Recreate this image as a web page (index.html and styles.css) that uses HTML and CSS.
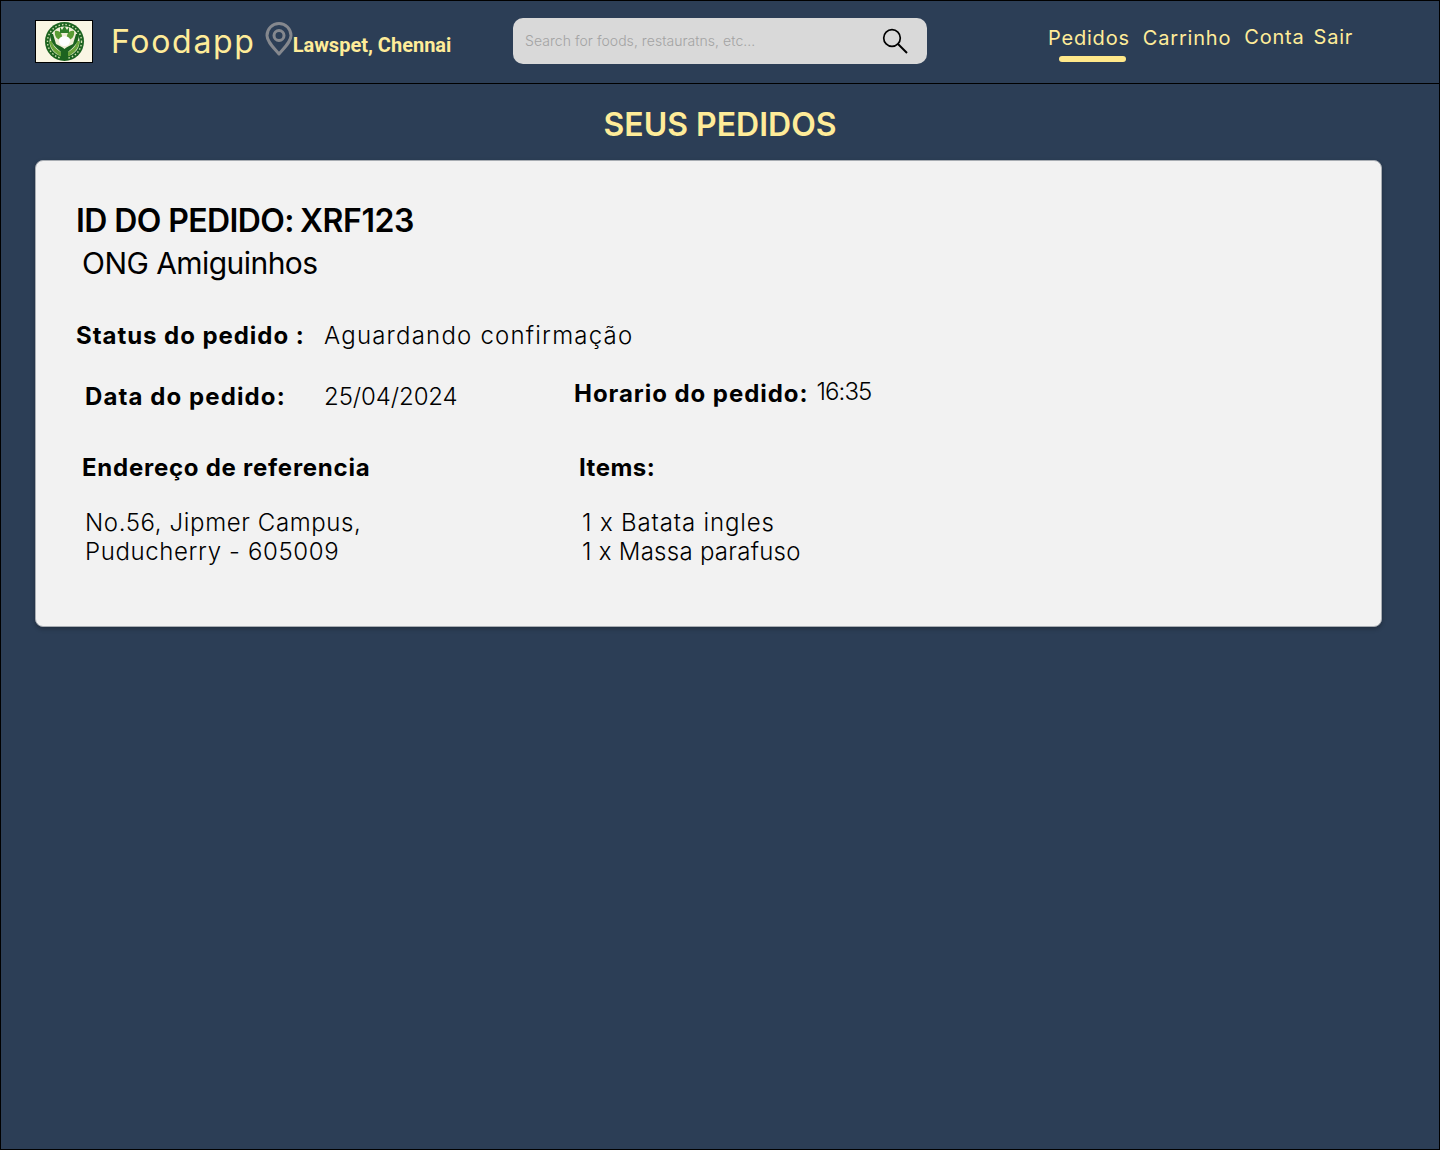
FILE: index.html
```html
<!DOCTYPE html>
<html lang="pt-BR">
<head>
    <meta charset="UTF-8">
    <meta name="viewport" content="width=device-width, initial-scale=1.0">
    <title>Foodapp - Seus pedidos</title>
    <link rel="stylesheet" href="styles.css">
</head>
<body>
    <header class="topbar">
        <div class="brand">
            <svg class="logo" viewBox="0 0 56 41" aria-hidden="true">
                <rect width="56" height="41" fill="#faf6e4"/>
                <circle cx="28.5" cy="20.5" r="19.5" fill="#1c6320"/>
                <circle cx="28.5" cy="20.5" r="17" fill="none" stroke="#cfe0b0" stroke-width="1.4" stroke-dasharray="1.5 2"/>
                <circle cx="28.5" cy="20.5" r="15" fill="#f1efd8"/>
                <path d="M13.5 20 C14 28 20 33 26 36 L31 36 C37 33 43 28 43.5 20 L41 20 C40 26 36 29 28.5 33 C21 29 17 26 16 20 Z" fill="#6aa53a"/>
                <path d="M14 13 L17 13 L20 23 C23 25 27 26 28.5 28 C30 26 34 25 37 23 L40 13 L43 13 C43 23 36 27 32 31 L32 39 L25 39 L25 31 C21 27 14 23 14 13 Z" fill="#1c6320"/>
                <path d="M19 10 C24 9 27 13 26 19 C21 19 18 15 19 10 Z M38 10 C33 9 30 13 31 19 C36 19 39 15 38 10 Z" fill="#5a9c34"/>
                <path d="M24 6 L26 9 L28.5 5 L31 9 L33 6 L33 12 L24 12 Z" fill="#2f7d2a"/>
                <path d="M23 19 C23 14 34 14 34 19 C34 24 31 25 28.5 25 C26 25 23 24 23 19 Z" fill="#ffffff"/>
            </svg>
            <span class="brand-name">Foodapp</span>
            <svg class="pin" viewBox="0 0 28 34" aria-hidden="true">
                <path d="M14 32 C8 25 2 19.5 2 13.5 A12 12 0 0 1 26 13.5 C26 19.5 20 25 14 32 Z" fill="none" stroke="#85888e" stroke-width="3" stroke-linejoin="round"/>
                <circle cx="14" cy="13.5" r="5" fill="none" stroke="#85888e" stroke-width="3"/>
            </svg>
            <span class="location">Lawspet, Chennai</span>
        </div>
        <div class="search">
            <span class="search-text">Search for foods, restauratns, etc...</span>
            <svg class="search-icon" viewBox="0 0 26 26" aria-hidden="true">
                <circle cx="10" cy="10" r="8.3" fill="none" stroke="#000" stroke-width="1.7"/>
                <path d="M16 16 L25 25" stroke="#000" stroke-width="1.9" fill="none"/>
            </svg>
        </div>
        <nav class="nav">
            <a class="nav-link active">Pedidos</a>
            <a class="nav-link">Carrinho</a>
            <a class="nav-link nav-link-up">Conta</a>
            <a class="nav-link nav-link-up nav-link-last">Sair</a>
        </nav>
    </header>

    <main class="content">
        <h1 class="page-title">SEUS PEDIDOS</h1>
        <section class="order-card">
            <h2 class="order-id"><span class="order-id-label">ID DO PEDIDO:</span><span>XRF123</span></h2>
            <p class="order-ong">ONG Amiguinhos</p>

            <div class="status-row">
                <strong class="status-label">Status do pedido :</strong>
                <span class="status-value">Aguardando confirmação</span>
            </div>

            <div class="date-row">
                <strong class="date-label">Data do pedido:</strong>
                <span class="date-value">25/04/2024</span>
                <strong class="time-label">Horario do pedido:</strong>
                <span class="time-value">16:35</span>
            </div>

            <div class="details">
                <div class="address">
                    <strong class="detail-title">Endereço de referencia</strong>
                    <p class="detail-text">No.56, Jipmer Campus,<br>Puducherry - 605009</p>
                </div>
                <div class="items">
                    <strong class="detail-title items-title">Items:</strong>
                    <p class="detail-text items-text"><span class="item-wide">1 x Batata ingles</span><br><span>1 x Massa parafuso</span></p>
                </div>
            </div>
        </section>
    </main>
</body>
</html>
```

FILE: styles.css
```css
* {
    box-sizing: border-box;
}
html, body {
    height: 100%;
}
body {
    margin: 0;
    height: 1150px;
    background-color: #2c3e56;
    border: 1px solid #000;
    font-family: Inter, Arial, sans-serif;
    color: #000;
    overflow: hidden;
}
.topbar {
    display: flex;
    align-items: center;
    height: 83px;
    padding-left: 34px;
    border-bottom: 1px solid #000;
}
.brand {
    display: flex;
    align-items: center;
    width: 478px;
}
.logo {
    width: 58px;
    height: 43px;
    margin-top: -1px;
    border: 1px solid #000;
    flex-shrink: 0;
}
.brand-name {
    margin: -1px 0 0 18px;
    font-size: 32px;
    letter-spacing: 1.7px;
    color: #ffec99;
}
.pin {
    width: 28px;
    height: 34px;
    margin: -6px 0 0 9px;
}
.location {
    margin: 5px 0 0 0;
    font-family: Roboto, sans-serif;
    font-size: 20px;
    font-weight: 700;
    color: #ffec99;
}
.search {
    display: flex;
    align-items: center;
    justify-content: space-between;
    width: 413.5px;
    height: 46px;
    margin-top: -3px;
    padding: 0 18.5px 0 12px;
    background-color: #d9d9d9;
    border-radius: 10px;
}
.search-text {
    font-size: 14px;
    font-weight: 300;
    letter-spacing: 0.05px;
    color: #a3a3a3;
}
.search-icon {
    width: 26px;
    height: 26px;
}
.nav {
    display: flex;
    margin-left: 121.5px;
    gap: 13px;
    margin-top: -8px;
}
.nav-link {
    position: relative;
    font-size: 20px;
    line-height: 24px;
    letter-spacing: 0.8px;
    color: #ffec99;
}
.nav-link-up {
    margin-top: -1px;
}
.nav-link-last {
    margin-left: -4px;
}
.nav-link.active::after {
    content: "";
    position: absolute;
    left: 11px;
    top: 30px;
    width: 67px;
    height: 6px;
    border-radius: 3px;
    background-color: #ffe88a;
}
.content {
    padding: 0 57px 0 34px;
}
.page-title {
    margin: 22px 0 16px;
    text-align: center;
    font-size: 32px;
    line-height: 38px;
    font-weight: 600;
    color: #ffec99;
    padding-left: 23px;
}
.order-card {
    height: 467px;
    padding: 41px 40px 0;
    background-color: #f2f2f2;
    border-radius: 8px;
    border: 1px solid #a8adb3;
    box-shadow: 0 2px 4px rgba(0, 0, 0, 0.25);
}
.order-id {
    display: flex;
    gap: 6px;
    margin: 0;
    font-size: 32px;
    line-height: 38px;
    font-weight: 600;
    letter-spacing: -0.4px;
}
.order-id-label {
    letter-spacing: -0.6px;
}
.order-ong {
    margin: 5px 0 0 6px;
    font-size: 30px;
    line-height: 36px;
    font-weight: 400;
    letter-spacing: -0.55px;
}
.status-row {
    display: flex;
    margin-top: 40px;
    font-size: 24px;
    line-height: 30px;
}
.status-label {
    width: 248px;
    letter-spacing: 0.95px;
}
.status-value {
    font-weight: 300;
    letter-spacing: 1.2px;
}
.date-row {
    display: flex;
    align-items: flex-start;
    margin-top: 31px;
    font-size: 24px;
    line-height: 30px;
}
.date-label {
    width: 239px;
    margin-left: 9px;
    letter-spacing: 1.1px;
}
.date-value {
    width: 250px;
    font-weight: 300;
    letter-spacing: -0.1px;
}
.time-label {
    margin-top: -3px;
    letter-spacing: 0.95px;
}
.time-value {
    margin: -5px 0 0 8px;
    font-weight: 300;
    letter-spacing: -0.9px;
}
.details {
    display: flex;
    margin-top: 41px;
    font-size: 24px;
    line-height: 29px;
}
.address {
    width: 497px;
    margin-left: 6px;
}
.detail-title {
    display: block;
    letter-spacing: 0.75px;
}
.items-title {
    letter-spacing: 0.5px;
}
.detail-text {
    margin: 26px 0 0 3px;
    font-weight: 300;
    letter-spacing: 0.62px;
}
.items-text {
    letter-spacing: 0.27px;
}
.item-wide {
    letter-spacing: 0.85px;
}
```
